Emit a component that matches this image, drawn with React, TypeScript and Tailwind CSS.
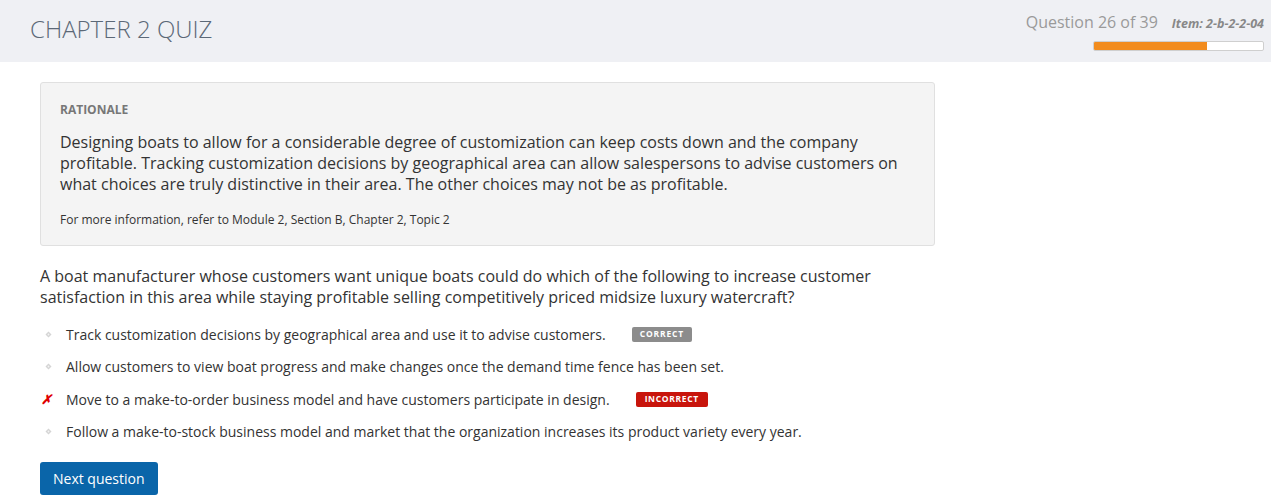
import React from 'react';

interface Answer {
  text: string;
  mark: 'none' | 'wrong';
  badge?: 'correct' | 'incorrect';
}

const answers: Answer[] = [
  { text: 'Track customization decisions by geographical area and use it to advise customers.', mark: 'none', badge: 'correct' },
  { text: 'Allow customers to view boat progress and make changes once the demand time fence has been set.', mark: 'none' },
  { text: 'Move to a make-to-order business model and have customers participate in design.', mark: 'wrong', badge: 'incorrect' },
  { text: 'Follow a make-to-stock business model and market that the organization increases its product variety every year.', mark: 'none' },
];

const Bullet = () => (
  <svg width="7" height="7" viewBox="0 0 7 7" className="ml-[4px]">
    <path d="M3.5 0.5 L6.5 3.5 L3.5 6.5 L0.5 3.5 Z" fill="#d4d4d4" />
    <circle cx="3.5" cy="3.5" r="0.9" fill="#f4f4f4" />
  </svg>
);

const App: React.FC = () => {
  const current = 26;
  const total = 39;

  return (
    <div className="min-h-[503px] bg-white text-[#333] font-['Open_Sans','Liberation_Sans',sans-serif]">
      {/* header */}
      <div className="flex h-[62px] justify-between bg-[#eff0f4] pl-[30px] pr-[7px]">
        <h1 className="pt-[13px] text-[24px] font-light leading-[32px] text-[#5b6877]">CHAPTER 2 QUIZ</h1>
        <div className="flex flex-col items-end pt-[11px]">
          <div className="flex items-baseline gap-[14px]">
            <span className="text-[16px] leading-[22px] text-[#9a9a9a]">
              Question {current} of {total}
            </span>
            <span className="text-[12.5px] font-bold italic text-[#888]">Item: 2-b-2-2-04</span>
          </div>
          <div className="mt-[7px] h-[10px] w-[171px] overflow-hidden rounded-[2px] border border-[#cfcfcf] bg-white">
            <div className="h-full bg-[#f28c1e]" style={{ width: `${(current / total) * 100}%` }} />
          </div>
        </div>
      </div>

      <div className="px-[40px] pt-[20px]">
        {/* rationale */}
        <div className="w-[895px] rounded-[3px] border border-[#e0e0e0] bg-[#f4f4f4] px-[19px] pb-[17px] pt-[19px]">
          <div className="text-[12px] font-bold leading-[16px] text-[#777]">RATIONALE</div>
          <p className="mt-[14px] text-[16px] leading-[21px] text-[#333]">
            Designing boats to allow for a considerable degree of customization can keep costs down and the company
            profitable. Tracking customization decisions by geographical area can allow salespersons to advise customers on
            what choices are truly distinctive in their area. The other choices may not be as profitable.
          </p>
          <p className="mt-[17px] text-[12px] leading-[16px] text-[#333]">
            For more information, refer to Module 2, Section B, Chapter 2, Topic 2
          </p>
        </div>

        {/* question */}
        <p className="mt-[20px] w-[860px] text-[16px] leading-[21px] text-[#333]">
          A boat manufacturer whose customers want unique boats could do which of the following to increase customer
          satisfaction in this area while staying profitable selling competitively priced midsize luxury watercraft?
        </p>

        <ul className="mt-[16px] flex flex-col gap-[12.6px]">
          {answers.map((a, i) => (
            <li key={i} className="flex h-[20px] items-center text-[14px] text-[#333]">
              <span className="flex w-[26px] items-center justify-start pl-[1px]">
                {a.mark === 'wrong' ? (
                  <span className="text-[13px] font-bold italic leading-none text-[#e00000]">✗</span>
                ) : (
                  <Bullet />
                )}
              </span>
              <span>{a.text}</span>
              {a.badge === 'correct' && (
                <span className="ml-[26px] flex h-[15px] items-center rounded-[2px] bg-[#8c8c8c] px-[8px] text-[8.5px] font-bold tracking-[0.1em] text-white">
                  CORRECT
                </span>
              )}
              {a.badge === 'incorrect' && (
                <span className="ml-[26px] flex h-[15px] items-center rounded-[2px] bg-[#c8150c] px-[9px] text-[8.5px] font-bold tracking-[0.08em] text-white">
                  INCORRECT
                </span>
              )}
            </li>
          ))}
        </ul>

        <button className="mt-[20px] h-[33px] rounded-[3px] bg-[#0a65a9] px-[13px] text-[14px] text-white">
          Next question
        </button>
      </div>
    </div>
  );
};

export default App;
